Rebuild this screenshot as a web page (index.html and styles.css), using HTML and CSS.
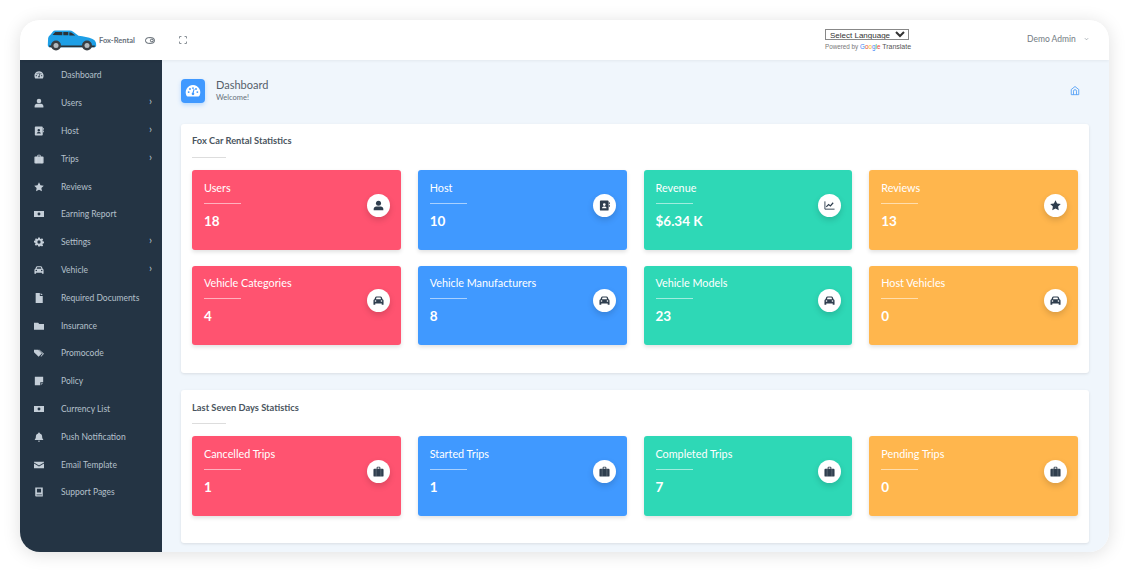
FILE: index.html
```html
<!DOCTYPE html>
<html lang="en">
<head>
    <meta charset="UTF-8">
    <meta name="viewport" content="width=device-width, initial-scale=1.0">
    <title>Dashboard</title>
    <link rel="stylesheet" href="styles.css">
</head>
<body>

    <!-- Shared icons -->
    <svg class="icon-defs" aria-hidden="true">
        <symbol id="i-gauge" viewBox="0 0 24 24"><path fill="currentColor" fill-rule="evenodd" d="M12 3a11 11 0 0 0-9.500 16.500c.3.5.8.7 1.300.7h16.400c.5 0 1-.2 1.300-.7A11 11 0 0 0 12 3zm0 3.200a1.400 1.400 0 1 1 0 2.800 1.400 1.400 0 0 1 0-2.800zM5.500 15a1.400 1.400 0 1 1 0-2.800 1.400 1.400 0 0 1 0 2.800zm2-4.600a1.400 1.400 0 1 1 0-2.800 1.400 1.400 0 0 1 0 2.800zm6.500 5.800a2 2 0 0 1-4 0c0-.9.600-1.600 1.300-1.900l1.500-5a.8.8 0 0 1 1.500.4l-1.200 4.900c.5.4.9 1 .9 1.600zm2.500-5.800a1.400 1.400 0 1 1 0-2.800 1.400 1.400 0 0 1 0 2.800zm2 4.600a1.400 1.400 0 1 1 0-2.800 1.400 1.400 0 0 1 0 2.800z"/></symbol>
        <symbol id="i-user" viewBox="0 0 24 24"><circle fill="currentColor" cx="12" cy="7" r="5.500"/><path fill="currentColor" d="M1.500 22.500v-3C1.500 16.500 4 14 7 14h10c3 0 5.500 2.500 5.500 5.500v3z"/></symbol>
        <symbol id="i-book" viewBox="0 0 24 24"><path fill="currentColor" fill-rule="evenodd" d="M4 1h15a2 2 0 0 1 2 2v18a2 2 0 0 1-2 2H4a2 2 0 0 1-2-2V3a2 2 0 0 1 2-2zm7.500 6a3 3 0 1 0 0 6 3 3 0 0 0 0-6zm-5 11h10c0-2.500-2-3.800-5-3.800s-5 1.300-5 3.800z"/><rect fill="currentColor" x="21.500" y="5" width="2" height="4"/><rect fill="currentColor" x="21.500" y="11" width="2" height="4"/></symbol>
        <symbol id="i-case" viewBox="0 0 24 24"><path fill="currentColor" fill-rule="evenodd" d="M8 6V3.500a2 2 0 0 1 2-2h4a2 2 0 0 1 2 2V6h5a2 2 0 0 1 2 2v13a2 2 0 0 1-2 2H3a2 2 0 0 1-2-2V8a2 2 0 0 1 2-2zm2 0h4V3.500h-4z"/><rect fill="#fff" opacity=".3" x="6" y="6" width="1.500" height="17"/><rect fill="#fff" opacity=".3" x="16.500" y="6" width="1.500" height="17"/></symbol>
        <symbol id="i-star" viewBox="0 0 24 24"><path fill="currentColor" d="M12 .5l3.500 7.300 8 1.100-5.800 5.500 1.400 8L12 18.600l-7.100 3.800 1.400-8L.5 8.900l8-1.100z"/></symbol>
        <symbol id="i-money" viewBox="0 0 24 24"><path fill="currentColor" fill-rule="evenodd" d="M0 5h24v14H0zm12 3.500a3.500 3.500 0 1 0 0 7 3.500 3.500 0 0 0 0-7z"/></symbol>
        <symbol id="i-gear" viewBox="0 0 24 24"><path fill="currentColor" fill-rule="evenodd" d="M10 1h4l.6 3.200 2 .8L19.300 3l2.800 2.800-1.900 2.700.8 2 3 .5v4l-3 .6-.8 2 1.800 2.600-2.800 2.800-2.700-1.800-2 .8L14 23h-4l-.6-3-2-.8L4.700 21l-2.800-2.800 1.800-2.600-.8-2L0 13V9l3-.5.8-2L2 5.800 4.700 3l2.700 2 2-.8zm2 7a4 4 0 1 0 0 8 4 4 0 0 0 0-8z"/></symbol>
        <symbol id="i-car" viewBox="0 0 24 24"><path fill="currentColor" fill-rule="evenodd" d="M7.500 3h9c1.200 0 2.200.7 2.600 1.800L20.800 9c1.300.5 2.200 1.700 2.200 3.200V21h-4v-2.500H5V21H1v-8.800C1 10.700 1.900 9.500 3.200 9l1.700-4.200C5.300 3.700 6.300 3 7.500 3zm.2 2.500L6.300 9h11.400l-1.400-3.500zM5.500 11.300a1.800 1.800 0 1 0 0 3.600 1.800 1.800 0 0 0 0-3.600zm13 0a1.800 1.800 0 1 0 0 3.600 1.800 1.800 0 0 0 0-3.600z"/></symbol>
        <symbol id="i-file" viewBox="0 0 24 24"><path fill="currentColor" d="M4 0h10v7h7v17H4z"/><path fill="currentColor" d="M16 0l5 5h-5z"/></symbol>
        <symbol id="i-folder" viewBox="0 0 24 24"><path fill="currentColor" d="M0 4h10l2.500 3H24v14H0z"/></symbol>
        <symbol id="i-tags" viewBox="0 0 24 24"><path fill="currentColor" d="M0 4h10l9 9-8 8-11-11z"/><path fill="currentColor" d="M13 4l11 10-7 7-1-1 5-6-10-10z"/></symbol>
        <symbol id="i-note" viewBox="0 0 24 24"><path fill="currentColor" d="M2 2h20v13h-7v7H2z"/><path fill="currentColor" opacity=".6" d="M17 17h5l-5 5z"/></symbol>
        <symbol id="i-bell" viewBox="0 0 24 24"><path fill="currentColor" d="M12 1a2 2 0 0 1 2 2v.6c3.400.8 5.500 3.600 5.500 7 0 4 1 5.300 2.500 7v1.400H2v-1.400c1.500-1.700 2.500-3 2.500-7 0-3.400 2.100-6.200 5.500-7V3a2 2 0 0 1 2-2zM9.500 21h5a2.500 2.500 0 0 1-5 0z"/></symbol>
        <symbol id="i-mail" viewBox="0 0 24 24"><path fill="currentColor" d="M0 4h24v2L12 13 0 6z"/><path fill="currentColor" d="M0 8.500l12 7 12-7V20H0z"/></symbol>
        <symbol id="i-manual" viewBox="0 0 24 24"><path fill="currentColor" fill-rule="evenodd" d="M3 1h18v22H5a2 2 0 0 1-2-2zm4 3v9h10V4zm-1 14v2h13v-2z"/></symbol>
        <symbol id="i-chart" viewBox="0 0 24 24"><path fill="none" stroke="currentColor" stroke-width="2" d="M2 3v17h21"/><path fill="none" stroke="currentColor" stroke-width="2.600" d="M5 15l5-5 4 3 6-7"/></symbol>
    </svg>

    <div class="window">
        <header class="topbar">
            <div class="brand">
                <svg class="brand-car" viewBox="0 0 50 21" aria-hidden="true">
                    <path fill="#1d9fe6" d="M.8 15l.3-6.500C1.300 7 2 6 3 5.300L6 1.500C6.500.9 7.200.6 8 .6h14.500c1.400 0 2.600.4 3.700 1.200l5.300 4c5 .6 10 1.600 14 3.200 1.800.7 3 2 3.500 4l.2 2.600c0 1-.6 1.600-1.600 1.600H2.500C1.500 17.200.8 16.300.8 15z"/>
                    <path fill="#2b3238" d="M5.500 5L8.300 2h7v3.200zM16.300 2h5v3.200h-5zM22.300 2.200c1.300.1 2.400.5 3.300 1.200l2.700 2h-6z"/>
                    <path fill="#2b3238" d="M2 15.500h46l-.5 1.700H2.500z"/>
                    <circle fill="#3a3f44" cx="9" cy="15.500" r="5"/><circle fill="#b3babf" cx="9" cy="15.500" r="2.500"/>
                    <circle fill="#3a3f44" cx="40" cy="15.500" r="5"/><circle fill="#b3babf" cx="40" cy="15.500" r="2.500"/>
                </svg>
                <span class="brand-name">Fox-Rental</span>
            </div>
            <svg class="toggle-icon" viewBox="0 0 12 8" aria-hidden="true">
                <rect x=".6" y=".6" width="10.800" height="6.800" rx="3.400" fill="none" stroke="#3b4650" stroke-width="1"/>
                <circle cx="8.200" cy="4" r="1.700" fill="none" stroke="#3b4650" stroke-width="1"/>
            </svg>
            <svg class="expand-icon" viewBox="0 0 10 10" aria-hidden="true">
                <path fill="none" stroke="#4a5560" stroke-width="1" d="M.5 3V1.500a1 1 0 0 1 1-1H3M7 .5h1.500a1 1 0 0 1 1 1V3M9.500 7v1.500a1 1 0 0 1-1 1H7M3 9.500H1.500a1 1 0 0 1-1-1V7"/>
            </svg>
            <div class="translate">
                <select class="lang-select">
                    <option>Select Language</option>
                </select>
                <div class="powered">Powered by <span class="g-blue">G</span><span class="g-red">o</span><span class="g-yellow">o</span><span class="g-blue">g</span><span class="g-green">l</span><span class="g-red">e</span> <b>Translate</b></div>
            </div>
            <div class="admin">
                <span>Demo Admin</span>
                <svg class="admin-caret" viewBox="0 0 6 4" aria-hidden="true"><path fill="none" stroke="#8a939b" stroke-width=".8" d="M1 1l2 2 2-2"/></svg>
            </div>
        </header>

        <div class="body-row">
            <nav class="sidebar">
                <a class="nav-item"><svg class="nav-icon"><use href="#i-gauge"/></svg>Dashboard</a>
                <a class="nav-item"><svg class="nav-icon"><use href="#i-user"/></svg>Users<span class="nav-arrow">›</span></a>
                <a class="nav-item"><svg class="nav-icon"><use href="#i-book"/></svg>Host<span class="nav-arrow">›</span></a>
                <a class="nav-item"><svg class="nav-icon"><use href="#i-case"/></svg>Trips<span class="nav-arrow">›</span></a>
                <a class="nav-item"><svg class="nav-icon"><use href="#i-star"/></svg>Reviews</a>
                <a class="nav-item"><svg class="nav-icon"><use href="#i-money"/></svg>Earning Report</a>
                <a class="nav-item"><svg class="nav-icon"><use href="#i-gear"/></svg>Settings<span class="nav-arrow">›</span></a>
                <a class="nav-item"><svg class="nav-icon"><use href="#i-car"/></svg>Vehicle<span class="nav-arrow">›</span></a>
                <a class="nav-item"><svg class="nav-icon"><use href="#i-file"/></svg>Required Documents</a>
                <a class="nav-item"><svg class="nav-icon"><use href="#i-folder"/></svg>Insurance</a>
                <a class="nav-item"><svg class="nav-icon"><use href="#i-tags"/></svg>Promocode</a>
                <a class="nav-item"><svg class="nav-icon"><use href="#i-note"/></svg>Policy</a>
                <a class="nav-item"><svg class="nav-icon"><use href="#i-money"/></svg>Currency List</a>
                <a class="nav-item"><svg class="nav-icon"><use href="#i-bell"/></svg>Push Notification</a>
                <a class="nav-item"><svg class="nav-icon"><use href="#i-mail"/></svg>Email Template</a>
                <a class="nav-item"><svg class="nav-icon"><use href="#i-manual"/></svg>Support Pages</a>
            </nav>

            <main class="content">
                <div class="page-head">
                    <div class="page-badge"><svg class="page-badge-icon"><use href="#i-gauge"/></svg></div>
                    <div class="page-titles">
                        <h1>Dashboard</h1>
                        <p>Welcome!</p>
                    </div>
                    <svg class="home-icon" viewBox="0 0 12 12" aria-hidden="true">
                        <path fill="none" stroke="#4a9af5" stroke-width="1" d="M1.500 11V4.800L6 1.200l4.500 3.600V11zM4.200 11V6.800a1.800 1.800 0 0 1 3.600 0V11"/>
                    </svg>
                </div>

                <section class="panel">
                    <h2>Fox Car Rental Statistics</h2>
                    <div class="panel-rule"></div>
                    <div class="stat-grid">
                        <div class="stat red"><div><h3>Users</h3><div class="stat-rule"></div><div class="stat-value">18</div></div><span class="stat-icon"><svg><use href="#i-user"/></svg></span></div>
                        <div class="stat blue"><div><h3>Host</h3><div class="stat-rule"></div><div class="stat-value">10</div></div><span class="stat-icon"><svg><use href="#i-book"/></svg></span></div>
                        <div class="stat green"><div><h3>Revenue</h3><div class="stat-rule"></div><div class="stat-value">$6.34 K</div></div><span class="stat-icon"><svg><use href="#i-chart"/></svg></span></div>
                        <div class="stat orange"><div><h3>Reviews</h3><div class="stat-rule"></div><div class="stat-value">13</div></div><span class="stat-icon"><svg><use href="#i-star"/></svg></span></div>
                        <div class="stat red"><div><h3>Vehicle Categories</h3><div class="stat-rule"></div><div class="stat-value">4</div></div><span class="stat-icon"><svg><use href="#i-car"/></svg></span></div>
                        <div class="stat blue"><div><h3>Vehicle Manufacturers</h3><div class="stat-rule"></div><div class="stat-value">8</div></div><span class="stat-icon"><svg><use href="#i-car"/></svg></span></div>
                        <div class="stat green"><div><h3>Vehicle Models</h3><div class="stat-rule"></div><div class="stat-value">23</div></div><span class="stat-icon"><svg><use href="#i-car"/></svg></span></div>
                        <div class="stat orange"><div><h3>Host Vehicles</h3><div class="stat-rule"></div><div class="stat-value">0</div></div><span class="stat-icon"><svg><use href="#i-car"/></svg></span></div>
                    </div>
                </section>

                <section class="panel">
                    <h2>Last Seven Days Statistics</h2>
                    <div class="panel-rule"></div>
                    <div class="stat-grid">
                        <div class="stat red"><div><h3>Cancelled Trips</h3><div class="stat-rule"></div><div class="stat-value">1</div></div><span class="stat-icon"><svg><use href="#i-case"/></svg></span></div>
                        <div class="stat blue"><div><h3>Started Trips</h3><div class="stat-rule"></div><div class="stat-value">1</div></div><span class="stat-icon"><svg><use href="#i-case"/></svg></span></div>
                        <div class="stat green"><div><h3>Completed Trips</h3><div class="stat-rule"></div><div class="stat-value">7</div></div><span class="stat-icon"><svg><use href="#i-case"/></svg></span></div>
                        <div class="stat orange"><div><h3>Pending Trips</h3><div class="stat-rule"></div><div class="stat-value">0</div></div><span class="stat-icon"><svg><use href="#i-case"/></svg></span></div>
                    </div>
                </section>
            </main>
        </div>
    </div>

</body>
</html>
```
FILE: styles.css
```css
body {
    margin: 0;
    height: 572px;
    padding: 20px;
    box-sizing: border-box;
    background-color: #fff;
    font-family: Lato, "Noto Sans", sans-serif;
    color: #333;
    overflow: hidden;
}

.icon-defs {
    display: none;
}

.window {
    height: 532px;
    display: flex;
    flex-direction: column;
    border-radius: 20px;
    overflow: hidden;
    box-shadow: 0 2px 18px rgba(0, 0, 0, 0.13);
}

/* Top bar */
.topbar {
    height: 40px;
    flex-shrink: 0;
    display: flex;
    align-items: center;
    background-color: #fff;
    box-shadow: 0 1px 3px rgba(0, 0, 0, 0.06);
    position: relative;
    padding-left: 27px;
}

.brand {
    display: flex;
    align-items: center;
    width: 98px;
}

.brand-car {
    width: 50px;
    height: 21px;
    flex-shrink: 0;
}

.brand-name {
    margin-left: 2px;
    font-size: 7.500px;
    font-weight: 700;
    color: #66707a;
    white-space: nowrap;
}

.toggle-icon {
    width: 10px;
    height: 7px;
}

.expand-icon {
    width: 8px;
    height: 8px;
    margin-left: 24px;
}

.translate {
    margin-left: auto;
    width: 202px;
    margin-top: -1px;
}

.lang-select {
    display: block;
    width: 84px;
    height: 11px;
    margin-top: -1px;
    padding: 0;
    font-family: "Liberation Sans", sans-serif;
    font-size: 8px;
    color: #333;
    background-color: #fff;
    border: 1px solid #888;
    border-radius: 0;
}

.powered {
    margin-top: 3px;
    font-family: "Liberation Sans", sans-serif;
    font-size: 6.300px;
    color: #777;
    white-space: nowrap;
}

.powered b {
    font-weight: 400;
    font-size: 7px;
    color: #555;
}

.g-blue { color: #4285f4; }
.g-red { color: #ea4335; }
.g-yellow { color: #fbbc05; }
.g-green { color: #34a853; }

.admin {
    display: flex;
    align-items: center;
    width: 82px;
    margin-top: -2px;
    font-size: 8.500px;
    color: #737b83;
}

.admin-caret {
    width: 5px;
    height: 4px;
    margin-left: 8px;
}

/* Layout under the top bar */
.body-row {
    flex: 1;
    min-height: 0;
    display: flex;
}

.sidebar {
    width: 142px;
    flex-shrink: 0;
    padding-top: 1.500px;
    box-sizing: border-box;
    background-color: #243444;
}

.nav-item {
    height: 27.800px;
    display: flex;
    align-items: center;
    padding-left: 14px;
    font-size: 8.500px;
    color: #b4c0cb;
}

.nav-icon {
    width: 10px;
    height: 10px;
    margin-right: 17px;
    flex-shrink: 0;
    color: #c4ced8;
}

.nav-arrow {
    margin-left: auto;
    margin-right: 10px;
    margin-top: -4px;
    font-size: 11px;
    line-height: 8px;
}

/* Main area */
.content {
    flex: 1;
    min-width: 0;
    padding: 19px 20px 0 19px;
    background-color: #f0f6fc;
}

.page-head {
    display: flex;
    align-items: center;
    height: 24px;
    margin-bottom: 21px;
}

.page-badge {
    width: 24px;
    height: 24px;
    display: flex;
    align-items: center;
    justify-content: center;
    border-radius: 4px;
    background-color: #4099ff;
    box-shadow: 0 2px 4px rgba(64, 153, 255, 0.3);
}

.page-badge-icon {
    width: 16px;
    height: 16px;
    color: #fff;
}

.page-titles {
    margin-left: 11px;
}

.page-titles h1 {
    margin: 0;
    font-size: 11px;
    font-weight: 400;
    line-height: 14px;
    color: #55606a;
}

.page-titles p {
    margin: 0;
    font-size: 7.500px;
    line-height: 12px;
    color: #66707a;
}

.home-icon {
    width: 10px;
    height: 11px;
    margin-left: auto;
    margin-right: 9px;
    margin-top: -2px;
}

.panel {
    height: 249px;
    box-sizing: border-box;
    margin-bottom: 17px;
    padding: 11px 11px 0;
    background-color: #fff;
    border-radius: 3px;
    box-shadow: 0 1px 3px rgba(0, 0, 0, 0.1);
}

.panel + .panel {
    height: 153px;
}

.panel h2 {
    margin: 0;
    font-size: 9.300px;
    font-weight: 700;
    line-height: 12px;
    color: #4a5560;
}

.panel + .panel h2 {
    padding-top: 1px;
    line-height: 11px;
}

.panel-rule {
    width: 34px;
    height: 1px;
    margin: 10px 0 12px;
    background-color: #ddd;
}

.stat-grid {
    display: grid;
    grid-template-columns: repeat(4, 1fr);
    gap: 16px 17px;
}

.stat {
    height: 79.500px;
    box-sizing: border-box;
    display: flex;
    justify-content: space-between;
    align-items: center;
    padding: 0 11px 9px 12px;
    border-radius: 3px;
    color: #fff;
    box-shadow: 0 2px 4px rgba(0, 0, 0, 0.12);
}

.stat.red { background-color: #ff5370; }
.stat.blue { background-color: #4099ff; }
.stat.green { background-color: #2ed8b6; }
.stat.orange { background-color: #ffb64d; }

.stat h3 {
    margin: 0;
    font-size: 10.800px;
    font-weight: 400;
    line-height: 14px;
    white-space: nowrap;
}

.stat-rule {
    width: 37px;
    height: 1px;
    margin: 8px 0 9px;
    background-color: rgba(255, 255, 255, 0.55);
}

.stat-value {
    font-size: 13.500px;
    font-weight: 700;
    line-height: 17px;
}

.stat-icon {
    width: 23px;
    height: 23px;
    display: flex;
    align-items: center;
    justify-content: center;
    border-radius: 50%;
    background-color: #fff;
    color: #2f3e4e;
    box-shadow: 0 3px 6px rgba(0, 0, 0, 0.15);
}

.stat-icon svg {
    width: 11px;
    height: 11px;
}
```
